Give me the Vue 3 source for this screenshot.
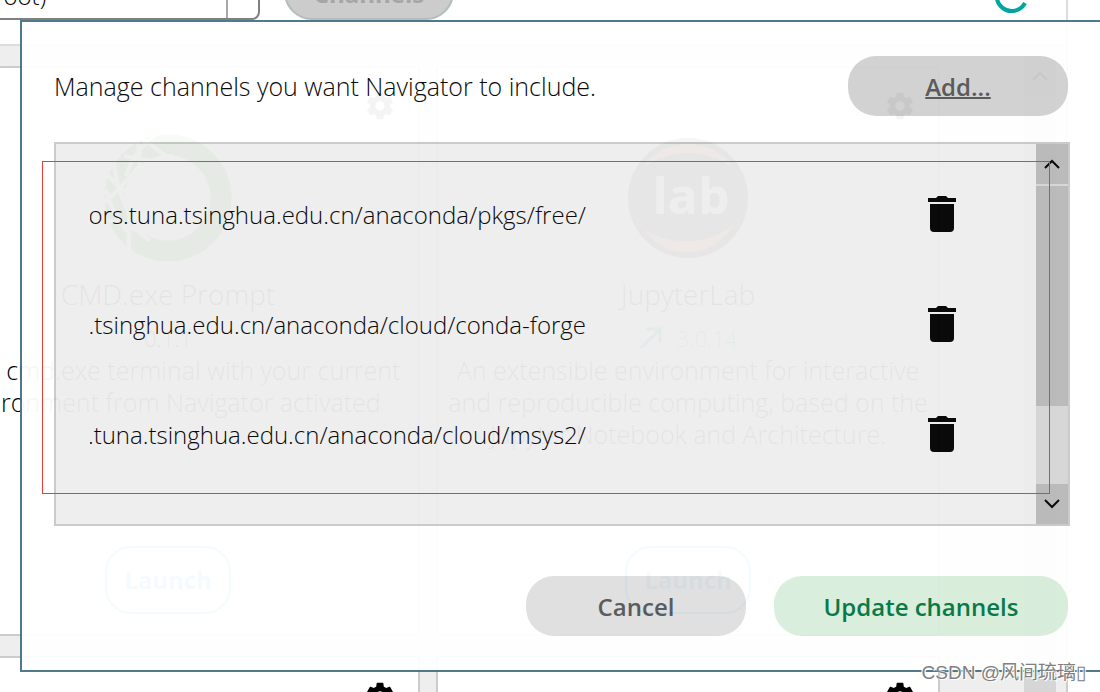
<script setup>
import { ref } from 'vue'

const environment = ref('base (root)')

const channels = ref([
  'https://mirrors.tuna.tsinghua.edu.cn/anaconda/pkgs/free/',
  'https://mirrors.tuna.tsinghua.edu.cn/anaconda/cloud/conda-forge',
  'https://mirrors.tuna.tsinghua.edu.cn/anaconda/cloud/msys2/',
])

const apps = [
  {
    id: 'cmd',
    name: 'CMD.exe Prompt',
    version: '0.1.1',
    upgrade: false,
    lines: ['Run a cmd.exe terminal with your current', 'environment from Navigator activated'],
  },
  {
    id: 'lab',
    name: 'JupyterLab',
    version: '3.0.14',
    upgrade: true,
    lines: [
      'An extensible environment for interactive',
      'and reproducible computing, based on the',
      'Jupyter Notebook and Architecture.',
    ],
  },
  { id: 'next-1' },
  { id: 'next-2' },
]

const gearPath =
  'M19.43 12.98c.04-.32.07-.64.07-.98s-.03-.66-.07-.98l2.11-1.65c.19-.15.24-.42.12-.64l-2-3.46c-.12-.22-.39-.3-.61-.22l-2.49 1c-.52-.4-1.08-.73-1.69-.98l-.38-2.65C14.46 2.18 14.25 2 14 2h-4c-.25 0-.46.18-.49.42l-.38 2.65c-.61.25-1.17.59-1.69.98l-2.49-1c-.23-.09-.49 0-.61.22l-2 3.46c-.13.22-.07.49.12.64l2.11 1.65c-.04.32-.07.65-.07.98s.03.66.07.98l-2.11 1.65c-.19.15-.24.42-.12.64l2 3.46c.12.22.39.3.61.22l2.49-1c.52.4 1.08.73 1.69.98l.38 2.65c.03.24.24.42.49.42h4c.25 0 .46-.18.49-.42l.38-2.65c.61-.25 1.17-.59 1.69-.98l2.49 1c.23.09.49 0 .61-.22l2-3.46c.12-.22.07-.49-.12-.64l-2.11-1.65zM12 15.5c-1.93 0-3.5-1.57-3.5-3.5s1.57-3.5 3.5-3.5 3.5 1.57 3.5 3.5-1.57 3.5-3.5 3.5z'

function removeChannel(index) {
  channels.value.splice(index, 1)
}
</script>

<template>
  <div class="window">
    <header class="toolbar">
      <div class="env">
        <select v-model="environment" class="env-select" aria-label="Environment">
          <option>base (root)</option>
        </select>
      </div>
      <button class="channels-btn" type="button" disabled>Channels</button>
      <svg class="spinner" viewBox="0 0 40 40" aria-hidden="true">
        <path d="M33 27 A15 15 0 1 1 33 13" fill="none" stroke="#00a69c" stroke-width="4" />
      </svg>
    </header>

    <main class="home">
      <div class="grid">
        <article v-for="app in apps" :key="app.id" class="card">
          <button class="gear" type="button" aria-label="Application settings">
            <svg viewBox="0 0 24 24"><path :d="gearPath" /></svg>
          </button>
          <template v-if="app.name">
            <svg v-if="app.id === 'cmd'" class="logo" viewBox="0 0 128 128" aria-hidden="true">
              <circle cx="64" cy="64" r="53" fill="none" stroke="#44a833" stroke-width="21" />
              <g fill="none" stroke="#fff" stroke-width="4">
                <path d="M70 22 C46 22 24 40 22 64 C22 84 34 100 46 106" />
                <path d="M38 4 L72 30" />
                <path d="M56 -2 C40 8 28 22 22 42" />
                <path d="M20 22 L52 28" />
                <path d="M34 8 C36 20 36 30 34 40" />
                <path d="M2 40 L30 66" />
                <path d="M-2 70 C10 62 24 44 34 34" />
                <path d="M10 28 C12 50 20 76 36 96" />
                <path d="M-2 84 C12 88 26 92 40 100" />
                <path d="M26 78 C24 92 24 106 26 124" />
                <path d="M2 56 C6 72 14 88 26 100" />
              </g>
            </svg>
            <svg v-else class="logo" viewBox="0 0 128 128" aria-hidden="true">
              <circle cx="64" cy="66" r="63" fill="#eeeeee" />
              <circle cx="64" cy="64" r="60" fill="#3c3c3c" />
              <path d="M19 34 C40 2 88 2 109 34 C84 14 44 14 19 34 Z" fill="#f58a3c" />
              <path d="M20 95 C44 112 84 112 109 91 C88 127 40 127 20 95 Z" fill="#f58a3c" />
              <circle cx="64" cy="64" r="36" fill="#484848" />
              <text x="67" y="80" text-anchor="middle" class="lab-text">lab</text>
            </svg>
            <h2 class="name">{{ app.name }}</h2>
            <p class="version" :class="{ upgrade: app.upgrade }">
              <svg v-if="app.upgrade" class="arrow" viewBox="0 0 24 24" aria-hidden="true">
                <path d="M2 22 L20 4 M7 3 H21 V16" fill="none" stroke="currentColor" stroke-width="3" />
              </svg>
              {{ app.version }}
            </p>
            <p class="desc">
              <span v-for="line in app.lines" :key="line">{{ line }}</span>
            </p>
            <button class="launch" type="button">Launch</button>
          </template>
        </article>
      </div>
      <div class="scrollbar page-scroll">
        <button class="step" type="button" aria-label="Scroll page up">
          <svg viewBox="0 0 16 10"><path d="M1 9 L8 2 L15 9" /></svg>
        </button>
      </div>
    </main>

    <section class="dialog" role="dialog" aria-label="Channels">
      <div class="dialog-head">
        <p class="title">Manage channels you want Navigator to include.</p>
        <button class="btn add" type="button">Add...</button>
      </div>
      <div class="list-box">
        <ul class="list">
          <li v-for="(channel, i) in channels" :key="channel" class="row">
            <div class="url"><span>{{ channel }}</span></div>
            <button class="trash" type="button" aria-label="Remove channel" @click="removeChannel(i)">
              <svg viewBox="0 0 28 36">
                <path d="M8 2 L10 0 H18 L20 2 H28 V6 H0 V2 Z M2 8 H26 V32 Q26 36 22 36 H6 Q2 36 2 32 Z" />
              </svg>
            </button>
          </li>
        </ul>
        <div class="scrollbar">
          <button class="step" type="button" aria-label="Scroll up">
            <svg viewBox="0 0 16 10"><path d="M1 9 L8 2 L15 9" /></svg>
          </button>
          <div class="thumb"></div>
          <button class="step last" type="button" aria-label="Scroll down">
            <svg viewBox="0 0 16 10"><path d="M1 1 L8 8 L15 1" /></svg>
          </button>
        </div>
      </div>
      <div class="dialog-foot">
        <button class="btn cancel" type="button">Cancel</button>
        <button class="btn update" type="button">Update channels</button>
      </div>
    </section>

    <div class="highlight" aria-hidden="true"></div>
    <p class="watermark">CSDN @风间琉璃▯</p>
  </div>
</template>

<style>
body {
  margin: 0;
}
</style>

<style scoped>
.window {
  position: relative;
  display: flex;
  flex-direction: column;
  height: 100vh;
  overflow: hidden;
  background: #fff;
  color: #000;
  font: 300 24px/32px 'Open Sans', 'Noto Sans', sans-serif;
}
button,
select {
  font: inherit;
  color: inherit;
  margin: 0;
}
button {
  padding: 0;
  border: 0;
  background: none;
  cursor: pointer;
}
h2,
p,
ul {
  margin: 0;
  padding: 0;
  font: inherit;
  list-style: none;
}
svg {
  display: block;
}

.toolbar {
  flex: none;
  display: flex;
  align-items: flex-end;
  gap: 24px;
  height: 20px;
  margin: 0 32px 0 -84px;
  padding-bottom: 24px;
  border-right: 2px solid #ddd;
}
.env {
  position: relative;
  width: 344px;
}
.env::after {
  content: '';
  position: absolute;
  top: 2px;
  bottom: 2px;
  right: 32px;
  width: 2px;
  background: #a8a8a8;
}
.env-select {
  display: block;
  box-sizing: border-box;
  width: 100%;
  height: 48px;
  padding: 0 36px 0 12px;
  border: 2px solid #808080;
  border-radius: 8px;
  background: #fff;
  appearance: none;
}
.channels-btn {
  width: 170px;
  height: 60px;
  padding-top: 8px;
  border: 2px solid #b3bdbd;
  border-radius: 28px;
  background: #ccc;
  color: #a6a6a6;
  font-weight: 700;
}
.spinner {
  width: 40px;
  height: 40px;
  margin: 0 34px 4px auto;
}

.home {
  flex: 1;
  min-height: 0;
  display: flex;
  align-items: flex-start;
  margin: 0 32px 0 -84px;
  padding: 10px 10px 0 0;
  border-top: 2px solid #ddd;
  border-right: 2px solid #ccc;
  background: #eee;
}
.grid {
  flex: 1;
  display: grid;
  grid-template-columns: 504px 504px;
  gap: 20px 16px;
  padding-top: 10px;
}
.card {
  display: flex;
  flex-direction: column;
  align-items: center;
  box-sizing: border-box;
  min-height: 570px;
  padding: 22px 22px 20px;
  border: 2px solid #ccc;
  background: #fff;
}
.gear {
  align-self: flex-end;
  width: 32px;
  height: 32px;
}
.gear svg {
  width: 32px;
  height: 32px;
}
.logo {
  width: 128px;
  height: 128px;
  margin-top: 12px;
}
.lab-text {
  fill: #fff;
  font: 700 50px 'Open Sans', sans-serif;
}
.name {
  margin-top: 16px;
  font-size: 28px;
}
.version {
  display: flex;
  align-items: center;
  gap: 14px;
  margin-top: 12px;
  font-size: 22px;
}
.version.upgrade {
  color: #1c8fb8;
}
.arrow {
  width: 24px;
  height: 24px;
}
.desc {
  display: flex;
  flex-direction: column;
  align-items: center;
  font-size: 25px;
  white-space: nowrap;
}
.launch {
  width: 126px;
  height: 68px;
  margin-top: auto;
  border: 2px solid #0aa5f0;
  border-radius: 26px;
  color: #0aa5f0;
  font-weight: 700;
}

.scrollbar {
  display: flex;
  flex-direction: column;
  width: 32px;
  background: #d6d6d6;
}
.page-scroll {
  align-self: stretch;
}
.step {
  display: flex;
  justify-content: center;
  align-items: center;
  height: 40px;
  background: #b9b9b9;
}
.page-scroll .step {
  background: #d0d0d0;
}
.step svg {
  width: 16px;
  height: 10px;
  fill: none;
  stroke: #000;
  stroke-width: 2;
}
.thumb {
  height: 220px;
  margin-top: 2px;
  background: #b9b9b9;
}
.last {
  margin-top: auto;
}

.dialog {
  position: absolute;
  top: 20px;
  left: 20px;
  right: -4px;
  padding: 34px 32px;
  border: 2px solid #4a7287;
  background: #fff;
  opacity: 0.955;
}
.dialog-head {
  display: flex;
  justify-content: space-between;
  align-items: center;
  padding-right: 2px;
}
.title {
  font-size: 25px;
}
.btn {
  width: 220px;
  height: 60px;
  border-radius: 28px;
  padding-top: 2px;
  font-weight: 600;
}
.add {
  background: #d1d1d1;
  color: #555;
  text-decoration: underline;
  text-decoration-thickness: 2px;
}
.list-box {
  display: flex;
  margin: 26px 0 50px;
  border: 2px solid #c9c9c9;
  background: #eee;
}
.list {
  flex: 1;
  min-width: 0;
  padding: 16px 0 34px;
}
.row {
  display: flex;
  justify-content: space-between;
  align-items: center;
  height: 110px;
  padding: 0 80px 0 34px;
}
.url {
  display: flex;
  justify-content: flex-end;
  width: 496px;
  overflow: hidden;
  white-space: nowrap;
}
.trash {
  padding-bottom: 2px;
}
.trash svg {
  width: 28px;
  height: 36px;
}
.dialog-foot {
  display: flex;
  justify-content: flex-end;
  gap: 28px;
  padding-right: 2px;
}
.cancel {
  background: #dfdfdf;
  color: #555;
}
.update {
  width: 294px;
  background: #d8eedb;
  color: #007440;
}

.highlight {
  position: absolute;
  top: 161px;
  left: 42px;
  right: 50px;
  height: 331px;
  border: 1px solid #f23b36;
  pointer-events: none;
}
.watermark {
  position: absolute;
  right: 14px;
  bottom: 6px;
  color: #808080;
  font: 400 19px/26px 'Liberation Sans', 'Noto Sans CJK SC', sans-serif;
  text-shadow: 1px 1px 0 #fff, -1px -1px 0 #fff;
}
</style>
